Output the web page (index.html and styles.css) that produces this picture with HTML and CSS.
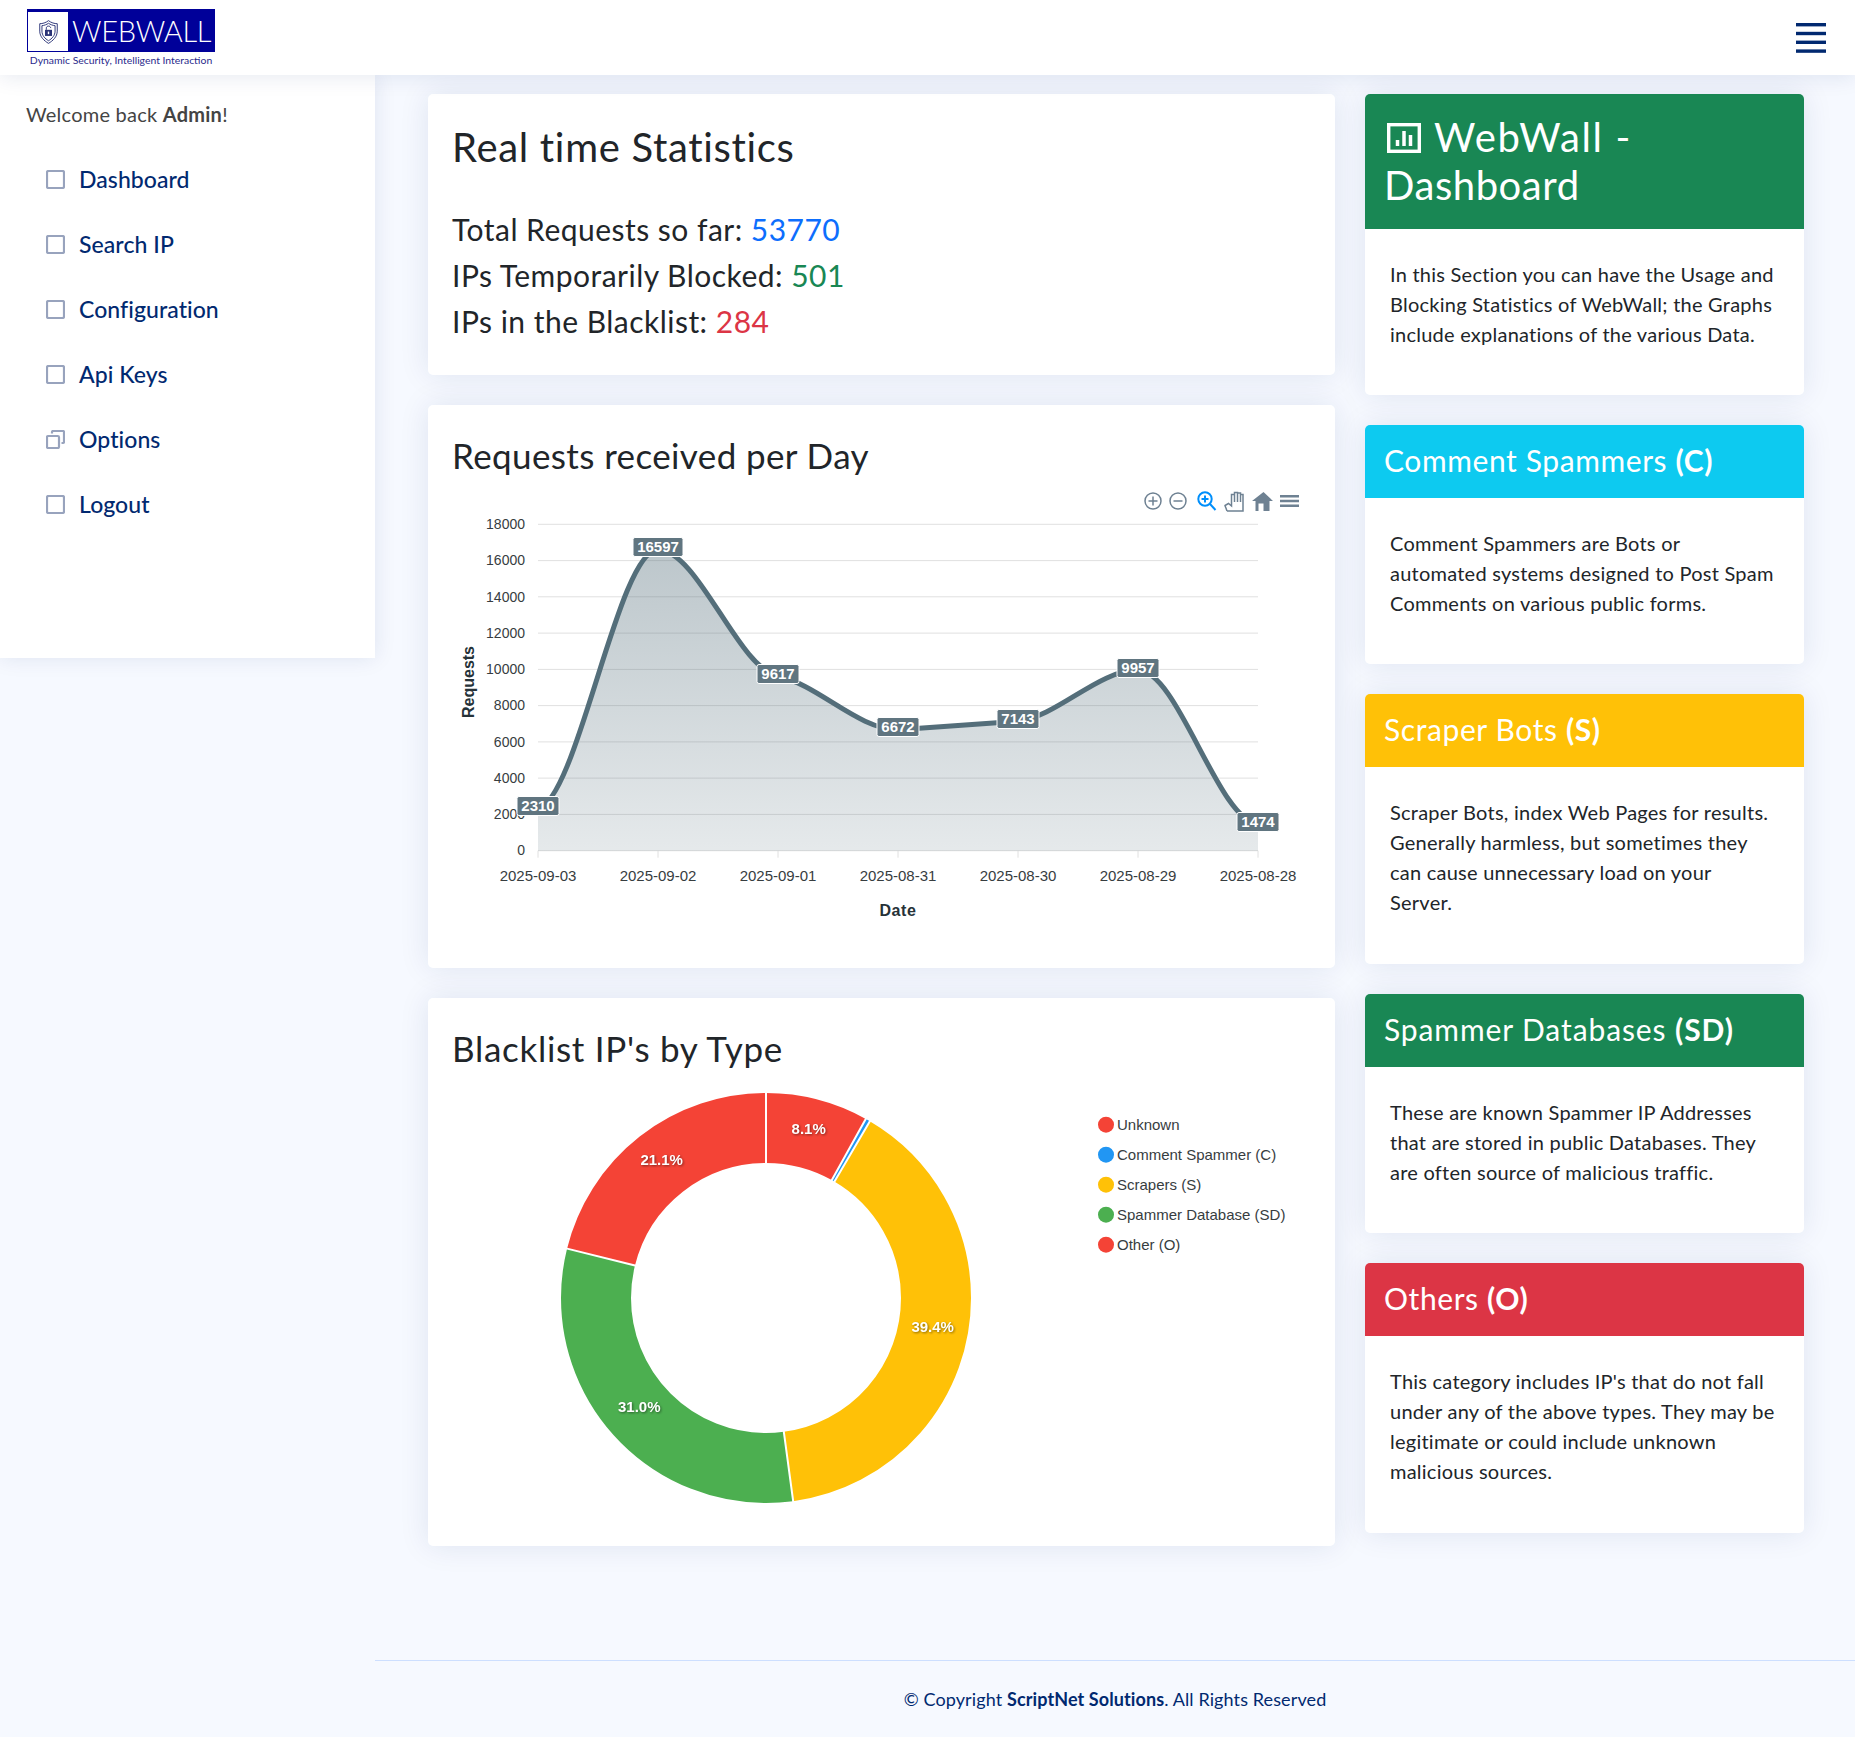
FILE: index.html
```html
<!DOCTYPE html>
<html lang="en">
<head>
<meta charset="utf-8">
<title>WebWall - Dashboard</title>
<link rel="stylesheet" href="styles.css">
</head>
<body>
<header class="topbar">
  <div class="logo">
    <div class="logo-box">
      <div class="logo-mark">
        <svg width="21" height="26" viewBox="0 0 24 28" fill="none" stroke="#2b3478" stroke-width="1.1">
          <path d="M12 1 C9 3.5 5 4.5 2 4.5 V13 C2 19.5 7 24 12 27 C17 24 22 19.5 22 13 V4.5 C19 4.500 15 3.500 12 1 Z"/>
          <path d="M12 4 C10 5.5 7 6.5 4.5 6.8 V13 C4.5 18 8 21.5 12 24 C16 21.5 19.5 18 19.5 13 V6.8 C17 6.5 14 5.5 12 4 Z"/>
          <rect x="8" y="11.5" width="8" height="7" fill="#2b3478" stroke="none"/>
          <path d="M9.5 11.5 V9.5 C9.5 6.5 14.5 6.5 14.5 9.5"/>
          <rect x="11.2" y="13.5" width="1.6" height="3" fill="#fff" stroke="none"/>
        </svg>
      </div>
      <span class="logo-name">WEBWALL</span>
    </div>
    <div class="logo-tag">Dynamic Security, Intelligent Interaction</div>
  </div>
  <button class="burger" aria-label="Menu">
    <svg width="30" height="30" viewBox="0 0 30 30" fill="#012970">
      <rect y="0" width="30" height="3.4"/><rect y="8.8" width="30" height="3.4"/><rect y="17.6" width="30" height="3.4"/><rect y="26.4" width="30" height="3.4"/>
    </svg>
  </button>
</header>

<div class="layout">
  <aside class="sidebar">
    <p class="welcome">Welcome back <strong>Admin</strong>!</p>
    <nav class="nav">
      <a class="nav-item"><svg class="nav-icon" viewBox="0 0 19 19"><rect x="1" y="1" width="17" height="17" rx="1.5"/></svg>Dashboard</a>
      <a class="nav-item"><svg class="nav-icon" viewBox="0 0 19 19"><rect x="1" y="1" width="17" height="17" rx="1.5"/></svg>Search IP</a>
      <a class="nav-item"><svg class="nav-icon" viewBox="0 0 19 19"><rect x="1" y="1" width="17" height="17" rx="1.5"/></svg>Configuration</a>
      <a class="nav-item"><svg class="nav-icon" viewBox="0 0 19 19"><rect x="1" y="1" width="17" height="17" rx="1.5"/></svg>Api Keys</a>
      <a class="nav-item"><svg class="nav-icon" viewBox="0 0 19 19"><rect x="1" y="6" width="12" height="12" rx="1.2"/><path d="M6 3.5 V2 a1 1 0 0 1 1 -1 H17 a1 1 0 0 1 1 1 V12 a1 1 0 0 1 -1 1 H15.500"/></svg>Options</a>
      <a class="nav-item"><svg class="nav-icon" viewBox="0 0 19 19"><rect x="1" y="1" width="17" height="17" rx="1.5"/></svg>Logout</a>
    </nav>
  </aside>

  <div class="content">
    <main class="columns">
      <section class="col">
        <article class="card stats">
          <h2 class="stats-title">Real time Statistics</h2>
          <p class="stat">Total Requests so far: <span class="c-blue">53770</span></p>
          <p class="stat">IPs Temporarily Blocked: <span class="c-green">501</span></p>
          <p class="stat">IPs in the Blacklist: <span class="c-red">284</span></p>
        </article>

        <article class="card chart-card">
          <h3 class="card-title">Requests received per Day</h3>
          <svg class="chart chart-line" viewBox="453 485 857 458" width="857" height="458">
            <defs>
              <linearGradient id="areaFill" x1="0" y1="0" x2="0" y2="1">
                <stop offset="0" stop-color="#546e7a" stop-opacity="0.39"/>
                <stop offset="1" stop-color="#546e7a" stop-opacity="0.15"/>
              </linearGradient>
            </defs>
            <g class="tool-stroke">
              <circle cx="1153" cy="501" r="8"/><path d="M1148.500 501h9M1153 496.500v9"/>
              <circle cx="1178" cy="501" r="8"/><path d="M1173.500 501h9"/>
              <path d="M1227 511 C1226 508 1225 506 1225 505.500 L1228.500 503.500 L1231.500 506 V496 M1231.500 496.500 V494.500 H1234.500 V502 M1234.500 494 V492.500 H1237.500 V502 M1237.500 493 H1240.500 V502 M1240.500 494.500 H1243 V511 H1227"/>
            </g>
            <g class="tool-blue">
              <circle cx="1205" cy="499" r="6.700"/><path d="M1210 504 L1215.500 510"/><path d="M1201.500 499h7M1205 495.500v7"/>
            </g>
            <path class="tool-fill" d="M1258.500 511v-7.500h5v7.500h6v-10h3.500L1263.500 492 1252 501h3.500v10z"/>
            <path class="tool-fill" d="M1280 495h19v2.400h-19zM1280 499.800h19v2.400h-19zM1280 504.600h19v2.400h-19z"/>

            <g class="grid">
              <path d="M538 524.300H1258M538 560.600H1258M538 596.800H1258M538 633.100H1258M538 669.400H1258M538 705.600H1258M538 741.900H1258M538 778.100H1258M538 814.400H1258M538 850.700H1258"/>
              <path d="M538 850.700v7M658 850.700v7M778 850.700v7M898 850.700v7M1018 850.700v7M1138 850.700v7M1258 850.700v7"/>
            </g>
            <g class="y-labels">
              <text x="525" y="529">18000</text><text x="525" y="565">16000</text><text x="525" y="602">14000</text><text x="525" y="638">12000</text><text x="525" y="674">10000</text><text x="525" y="710">8000</text><text x="525" y="747">6000</text><text x="525" y="783">4000</text><text x="525" y="819">2000</text><text x="525" y="855">0</text>
            </g>
            <path fill="url(#areaFill)" d="M538 808.800 C578 798.800 618 549.700 658 549.700 C698 549.700 738 668.300 778 676.300 C818 684.300 858 729.700 898 729.700 C938 727 978 723.900 1018 721.200 C1058 716.200 1098 670.100 1138 670.100 C1178 670.100 1218 820.700 1258 824 V850.700 H538 Z"/>
            <path class="line" d="M538 808.800 C578 798.800 618 549.700 658 549.700 C698 549.700 738 668.300 778 676.300 C818 684.300 858 729.700 898 729.700 C938 727 978 723.900 1018 721.200 C1058 716.200 1098 670.100 1138 670.100 C1178 670.100 1218 820.700 1258 824"/>
            <g class="x-labels">
              <text x="538" y="881">2025-09-03</text><text x="658" y="881">2025-09-02</text><text x="778" y="881">2025-09-01</text><text x="898" y="881">2025-08-31</text><text x="1018" y="881">2025-08-30</text><text x="1138" y="881">2025-08-29</text><text x="1258" y="881">2025-08-28</text>
            </g>
            <text class="axis-title axis-date" x="898" y="916">Date</text>
            <text class="axis-title" transform="translate(474 682) rotate(-90)">Requests</text>
            <g class="badges">
              <rect x="517" y="796.500" width="42" height="19" rx="2"/>
              <rect x="633" y="537.500" width="50" height="19" rx="2"/>
              <rect x="757" y="664.500" width="42" height="19" rx="2"/>
              <rect x="877" y="717.500" width="42" height="19" rx="2"/>
              <rect x="997" y="709.500" width="42" height="19" rx="2"/>
              <rect x="1117" y="658.500" width="42" height="19" rx="2"/>
              <rect x="1237" y="812.500" width="42" height="19" rx="2"/>
            </g>
            <g class="badge-text">
              <text x="538" y="811">2310</text><text x="658" y="552">16597</text><text x="778" y="679">9617</text><text x="898" y="732">6672</text><text x="1018" y="724">7143</text><text x="1138" y="673">9957</text><text x="1258" y="827">1474</text>
            </g>
          </svg>
        </article>

        <article class="card chart-card">
          <h3 class="card-title title-wide">Blacklist IP's by Type</h3>
          <svg class="chart chart-donut" viewBox="453 1085 857 435" width="857" height="435">
            <g transform="translate(766 1298)">
              <g transform="rotate(-90)" fill="none" stroke-width="70">
                <circle r="170" pathLength="284" stroke="#f44336" stroke-dasharray="23 261"/>
                <circle r="170" pathLength="284" stroke="#2196f3" stroke-dasharray="1 283" stroke-dashoffset="-23"/>
                <circle r="170" pathLength="284" stroke="#ffc107" stroke-dasharray="112 172" stroke-dashoffset="-24"/>
                <circle r="170" pathLength="284" stroke="#4caf50" stroke-dasharray="88 196" stroke-dashoffset="-136"/>
                <circle r="170" pathLength="284" stroke="#f44336" stroke-dasharray="60 224" stroke-dashoffset="-224"/>
              </g>
              <path class="seams" d="M0 -134V-206M65.300 -117L100.300 -179.900M67.900 -115.500L104.300 -177.600M17.700 132.800L27.300 204.200M-130 -32.300L-199.900 -49.600"/>
            </g>
            <g class="slice-labels">
              <text x="808.700" y="1134">8.1%</text>
              <text x="661.700" y="1165">21.1%</text>
              <text x="932.700" y="1332">39.4%</text>
              <text x="639.300" y="1412">31.0%</text>
            </g>
            <g>
              <circle cx="1106" cy="1124.700" r="8" fill="#f44336"/>
              <circle cx="1106" cy="1154.700" r="8" fill="#2196f3"/>
              <circle cx="1106" cy="1184.700" r="8" fill="#ffc107"/>
              <circle cx="1106" cy="1214.700" r="8" fill="#4caf50"/>
              <circle cx="1106" cy="1244.700" r="8" fill="#f44336"/>
            </g>
            <g class="legend">
              <text x="1117" y="1130">Unknown</text>
              <text x="1117" y="1160">Comment Spammer (C)</text>
              <text x="1117" y="1190">Scrapers (S)</text>
              <text x="1117" y="1220">Spammer Database (SD)</text>
              <text x="1117" y="1250">Other (O)</text>
            </g>
          </svg>
        </article>
      </section>

      <section class="col">
        <article class="card info">
          <h3 class="info-head head-large bg-green">
            <svg class="head-icon" width="34" height="30" viewBox="0 0 34 30" fill="none" stroke="#fff" stroke-width="3.400"><rect x="1.700" y="1.700" width="30.600" height="26.600"/><path d="M10.500 23v-6M17 23V8M23.500 23V12" stroke-width="3.500"/></svg><span class="head-wide">WebWall -</span> Dashboard
          </h3>
          <p class="info-body">In this Section you can have the Usage and Blocking Statistics of WebWall; the Graphs include explanations of the various Data.</p>
        </article>
        <article class="card info">
          <h3 class="info-head bg-cyan">Comment Spammers <strong>(C)</strong></h3>
          <p class="info-body">Comment Spammers are Bots or automated systems designed to Post Spam Comments on various public forms.</p>
        </article>
        <article class="card info info-long">
          <h3 class="info-head bg-yellow">Scraper Bots <strong>(S)</strong></h3>
          <p class="info-body">Scraper Bots, index Web Pages for results. Generally harmless, but sometimes they can cause unnecessary load on your Server.</p>
        </article>
        <article class="card info">
          <h3 class="info-head bg-green head-sd">Spammer Databases <strong>(SD)</strong></h3>
          <p class="info-body">These are known Spammer IP Addresses that are stored in public Databases. They are often source of malicious traffic.</p>
        </article>
        <article class="card info info-long">
          <h3 class="info-head bg-red">Others <strong>(O)</strong></h3>
          <p class="info-body">This category includes IP's that do not fall under any of the above types. They may be legitimate or could include unknown malicious sources.</p>
        </article>
      </section>
    </main>
    <footer class="footer">© Copyright <strong>ScriptNet Solutions</strong>. All Rights Reserved</footer>
  </div>
</div>
</body>
</html>
```
FILE: styles.css
```css
* { box-sizing: border-box; }
html, body { margin: 0; padding: 0; }
body {
  background: #f6f9ff;
  color: #212529;
  font-family: "Lato", "Noto Sans", sans-serif;
  font-size: 20px;
  line-height: 1.5;
  letter-spacing: 0.012em;
  height: 1737px;
  overflow: hidden;
}

.topbar {
  position: relative;
  z-index: 3;
  height: 75px;
  background: #fff;
  box-shadow: 0 2px 20px rgba(1, 41, 112, 0.1);
  display: flex;
  align-items: flex-start;
  justify-content: space-between;
  padding: 9px 29px 0 27px;
}
.logo { width: 188px; }
.logo-box {
  height: 43px;
  background: #000099;
  display: flex;
  align-items: flex-end;
  border: 1px solid #000099;
}
.logo-mark {
  flex: none;
  width: 40px;
  height: 39px;
  background: #fff;
  display: flex;
  align-items: center;
  justify-content: center;
}
.logo-name {
  align-self: center;
  color: #fff;
  font-size: 29px;
  font-weight: 300;
  line-height: 1;
  letter-spacing: -0.3px;
  margin-left: 4px;
}
.logo-tag {
  color: #2a2a8c;
  font-size: 10.400px;
  letter-spacing: 0;
  line-height: 16px;
  text-align: center;
  white-space: nowrap;
}
.burger {
  border: 0;
  padding: 0;
  margin-top: 14px;
  background: none;
  display: block;
  height: 30px;
}

.layout {
  display: grid;
  grid-template-columns: 375px 1fr;
  height: 1662px;
}
.sidebar {
  position: relative;
  z-index: 2;
  height: 583px;
  background: #fff;
  box-shadow: 0 0 20px rgba(1, 41, 112, 0.1);
  padding: 0 0 0 26px;
}
.welcome {
  margin: 0;
  padding-top: 24px;
  height: 71.500px;
  color: #444;
  line-height: 30px;
}
.nav { display: flex; flex-direction: column; padding-left: 20px; }
.nav-item {
  height: 65px;
  display: flex;
  align-items: center;
  gap: 14px;
  color: #012970;
  font-size: 23px;
  font-weight: 500;
  letter-spacing: 0.003em;
}
.nav-icon {
  width: 19px;
  height: 19px;
  fill: none;
  stroke: #98a3bd;
  stroke-width: 2.200;
  flex: none;
}

.content { display: flex; flex-direction: column; }
.columns {
  display: grid;
  grid-template-columns: 907px 439px;
  gap: 30px;
  padding: 19px 0 0 53px;
}
.col { display: flex; flex-direction: column; gap: 30px; }
.card {
  background: #fff;
  border-radius: 5px;
  box-shadow: 0 0 30px rgba(1, 41, 112, 0.1);
  overflow: hidden;
}

.stats { height: 281px; padding: 25px 25px 25px 24px; }
.stats-title {
  margin: 0 0 30.500px;
  font-size: 40px;
  font-weight: 400;
  line-height: 56px;
  letter-spacing: 0.017em;
}
.stat { margin: 0; font-size: 30px; line-height: 46px; letter-spacing: 0.016em; }
.c-blue { color: #0d6efd; }
.c-green { color: #198754; }
.c-red { color: #dc3545; }

.chart-card { padding: 25px 25px 25px; }
.card-title {
  margin: 0 0 0 -1px;
  font-size: 35px;
  font-weight: 400;
  line-height: 50px;
  letter-spacing: 0.011em;
}
.title-wide { letter-spacing: 0.02em; }
.chart { display: block; letter-spacing: 0; }
.chart-line { margin-top: 5px; }
.chart-donut { margin: 12px 0 1px; }
.chart text { font-family: "Liberation Sans", Arial, sans-serif; }
.grid path { fill: none; stroke: #e0e0e0; stroke-width: 1; }
.y-labels text { font-size: 14px; fill: #373d3f; text-anchor: end; }
.x-labels text { font-size: 15px; fill: #373d3f; text-anchor: middle; }
.axis-title { font-size: 16px; font-weight: 700; fill: #263238; text-anchor: middle; }
.axis-date { letter-spacing: 0.6px; }
.line { fill: none; stroke: #546e7a; stroke-width: 5; }
.badges rect { fill: #607580; stroke: #fff; stroke-width: 1; }
.badge-text text { font-size: 15px; font-weight: 700; fill: #fff; text-anchor: middle; }
.tool-stroke { fill: none; stroke: #6e8192; stroke-width: 1.500; }
.tool-blue { fill: none; stroke: #008ffb; stroke-width: 2; }
.tool-fill { fill: #6e8192; }
.seams { fill: none; stroke: #fff; stroke-width: 2; }
.slice-labels text {
  font-size: 15px;
  font-weight: 700;
  fill: #fff;
  text-anchor: middle;
  filter: drop-shadow(1px 1px 1px rgba(0, 0, 0, 0.45));
}
.legend text { font-size: 15px; fill: #373d3f; }

.info-head {
  margin: 0;
  padding: 17px 19px 20px;
  color: #fff;
  font-size: 30px;
  font-weight: 400;
  line-height: 36px;
  letter-spacing: 0.02em;
}
.head-sd { letter-spacing: 0.03em; }
.head-large {
  padding: 18.500px 19px 20.500px;
  font-size: 40px;
  line-height: 48px;
  letter-spacing: 0.014em;
}
.head-icon { margin: 0 13px 0 3px; vertical-align: -1px; }
.head-wide { letter-spacing: 0.04em; }
.bg-green { background: #198754; }
.bg-cyan { background: #0dcaf0; }
.bg-yellow { background: #ffc107; }
.bg-red { background: #dc3545; }
.info-body {
  margin: 0;
  padding: 30px 29px 46px 25px;
  line-height: 30px;
}
.info-long .info-body { padding-bottom: 47px; }

.footer {
  margin-top: auto;
  height: 77px;
  border-top: 1px solid #cddfff;
  text-align: center;
  line-height: 76px;
  color: #012970;
  font-size: 18px;
  letter-spacing: 0.006em;
}
```
